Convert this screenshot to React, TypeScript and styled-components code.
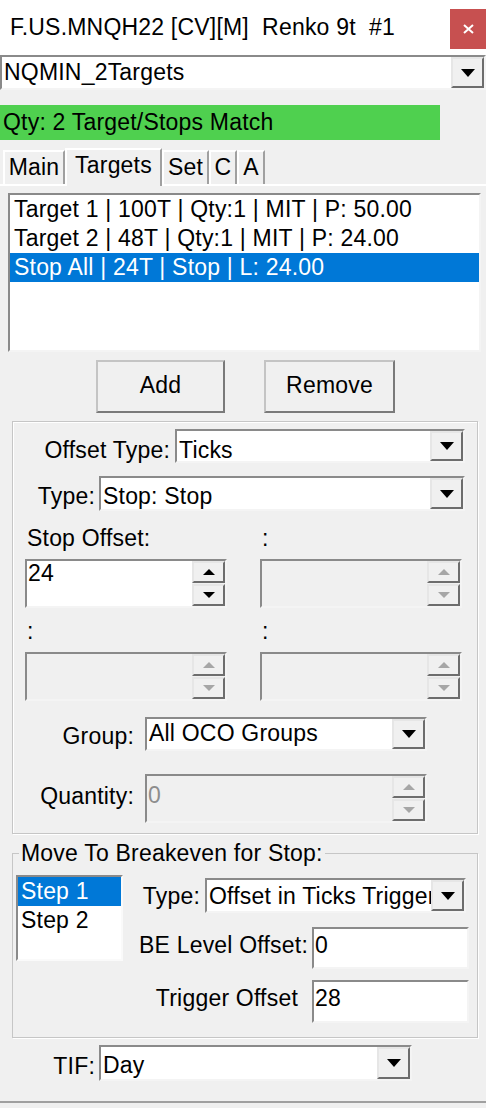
import React from "react";
import styled, { createGlobalStyle, css } from "styled-components";

const GlobalStyle = createGlobalStyle`
  html, body {
    margin: 0;
    padding: 0;
    background: #f0f0f0;
  }
  * {
    box-sizing: border-box;
  }
`;

const sunken = css`
  border-style: solid;
  border-width: 2px;
  border-color: #8a8a8a #f4f4f4 #f4f4f4 #8a8a8a;
`;

const raised = css`
  border-style: solid;
  border-width: 2px;
  border-color: #e6e6e6 #6d6d6d #6d6d6d #e6e6e6;
`;

const Window = styled.div`
  width: 486px;
  height: 1108px;
  overflow: hidden;
  background: #f0f0f0;
  font-family: "Liberation Sans", Arial, sans-serif;
  font-size: 23px;
  line-height: 23px;
  letter-spacing: 0.2px;
  color: #000;
  display: flex;
  flex-direction: column;
`;

const TitleBar = styled.div`
  height: 55px;
  flex: none;
  background: #fff;
  display: flex;
  justify-content: space-between;
  align-items: flex-start;
`;

const TitleText = styled.div`
  padding-left: 10px;
  line-height: 55px;
  white-space: pre;
`;

const CloseButton = styled.div`
  width: 36px;
  height: 40px;
  margin-top: 9px;
  background: #c75050;
  display: flex;
  align-items: center;
  justify-content: center;
`;

const Combo = styled.div<{ $w: number; $h: number }>`
  width: ${(p) => p.$w}px;
  height: ${(p) => p.$h}px;
  flex: none;
  ${sunken};
  background: #fff;
  display: flex;
`;

const ComboValue = styled.div<{ $pt: number }>`
  flex: 1;
  min-width: 0;
  overflow: hidden;
  white-space: nowrap;
  padding: ${(p) => p.$pt}px 0 0 2px;
`;

const DropButton = styled.div`
  width: 33px;
  flex: none;
  ${raised};
  background: #f0f0f0;
  display: flex;
  align-items: center;
  justify-content: center;
`;

const StatusBar = styled.div`
  width: 440px;
  height: 35px;
  margin-top: 15px;
  flex: none;
  background: #4fd04f;
  line-height: 35px;
  padding-left: 3px;
  white-space: nowrap;
`;

const TabStrip = styled.div`
  display: flex;
  align-items: flex-end;
  height: 36px;
  margin-top: 8px;
  padding-left: 3px;
  flex: none;
  position: relative;
  z-index: 1;
`;

const Tab = styled.div<{ $w: number; $active?: boolean }>`
  width: ${(p) => p.$w}px;
  height: ${(p) => (p.$active ? 38 : 34)}px;
  margin-bottom: ${(p) => (p.$active ? -2 : 0)}px;
  border-style: solid;
  border-width: 2px 2px 0 2px;
  border-color: #fff #a0a0a0 transparent #fff;
  background: #f0f0f0;
  text-align: center;
  padding-top: 4px;
  white-space: nowrap;
`;

const TabPanel = styled.div`
  flex: 1;
  margin-bottom: 5px;
  border-top: 2px solid #fff;
  border-bottom: 2px solid #a0a0a0;
  display: flex;
  flex-direction: column;
  align-items: flex-start;
`;

const ListBox = styled.div<{ $w: number; $h: number }>`
  width: ${(p) => p.$w}px;
  height: ${(p) => p.$h}px;
  flex: none;
  ${sunken};
  background: #fff;
  overflow: hidden;
`;

const ListItem = styled.div<{ $selected?: boolean }>`
  height: 29px;
  line-height: 29px;
  padding-left: 3px;
  white-space: nowrap;
  background: ${(p) => (p.$selected ? "#0078d7" : "transparent")};
  color: ${(p) => (p.$selected ? "#fff" : "#000")};
`;

const TargetList = styled(ListBox)`
  margin: 7px 0 0 8px;
  & > div {
    padding-left: 4px;
  }
`;

const ButtonRow = styled.div`
  display: flex;
  gap: 39px;
  margin: 8px 0 0 96px;
`;

const PushButton = styled.div<{ $w: number }>`
  width: ${(p) => p.$w}px;
  height: 53px;
  border-style: solid;
  border-width: 2px;
  border-color: #c4c4c4 #7a7a7a #7a7a7a #c4c4c4;
  background: #f0f0f0;
  display: flex;
  align-items: center;
  justify-content: center;
  padding-bottom: 3px;
`;

const GroupBox = styled.div`
  width: 466px;
  margin: 8px 0 0 12px;
  border: 1px solid #c6c6c6;
  box-shadow: 1px 1px 0 #fff, inset 1px 1px 0 #fff;
  padding-bottom: 10px;
  display: flex;
  flex-direction: column;
`;

const FieldRow = styled.div<{ $mt: number }>`
  display: flex;
  align-items: flex-start;
  margin-top: ${(p) => p.$mt}px;
`;

const FieldLabel = styled.div<{ $w: number; $pt: number; $pr: number }>`
  width: ${(p) => p.$w}px;
  flex: none;
  padding-top: ${(p) => p.$pt}px;
  padding-right: ${(p) => p.$pr}px;
  text-align: right;
  white-space: nowrap;
`;

const SpinGrid = styled.div<{ $mt: number }>`
  display: grid;
  grid-template-columns: 202px 202px;
  column-gap: 33px;
  row-gap: 9px;
  margin: ${(p) => p.$mt}px 0 0 12px;
`;

const CaptionText = styled.div<{ $mt?: number }>`
  height: 23px;
  margin-top: ${(p) => p.$mt ?? 0}px;
  padding-left: 2px;
  white-space: nowrap;
`;

const Spinner = styled.div<{ $w: number; $h: number; $disabled?: boolean }>`
  width: ${(p) => p.$w}px;
  height: ${(p) => p.$h}px;
  flex: none;
  ${sunken};
  background: ${(p) => (p.$disabled ? "#f0f0f0" : "#fff")};
  color: ${(p) => (p.$disabled ? "#8d8d8d" : "#000")};
  display: flex;
`;

const SpinValue = styled.div<{ $pt: number }>`
  flex: 1;
  padding: ${(p) => p.$pt}px 0 0 1px;
`;

const SpinButtons = styled.div`
  width: 33px;
  flex: none;
  display: flex;
  flex-direction: column;
  gap: 1px;
  background: #f0f0f0;
`;

const SpinButton = styled.div`
  flex: 1;
  ${raised};
  background: #f0f0f0;
  display: flex;
  align-items: center;
  justify-content: center;
`;

const BreakevenBox = styled.fieldset`
  width: 466px;
  margin: 8px 0 0 12px;
  padding: 0 0 14px 0;
  min-width: 0;
  border: 1px solid #c6c6c6;
  box-shadow: 1px 1px 0 #fff;
`;

const Legend = styled.legend`
  margin-left: 6px;
  padding: 0 2px;
  line-height: 23px;
  white-space: nowrap;
`;

const BreakevenBody = styled.div`
  display: flex;
  align-items: flex-start;
  margin-top: 10px;
`;

const StepList = styled(ListBox)`
  margin-left: 3px;
  border-color: #8a8a8a #fafafa #fafafa #8a8a8a;
`;

const StepColumn = styled.div`
  display: flex;
  flex-direction: column;
`;

const TextBox = styled.div<{ $w: number; $h: number }>`
  width: ${(p) => p.$w}px;
  height: ${(p) => p.$h}px;
  flex: none;
  ${sunken};
  background: #fff;
  padding: 5px 0 0 1px;
`;

function ArrowGlyph({
  up,
  w,
  h,
  color = "#000",
}: {
  up?: boolean;
  w: number;
  h: number;
  color?: string;
}) {
  const points = up ? `0,${h} ${w},${h} ${w / 2},0` : `0,0 ${w},0 ${w / 2},${h}`;
  return (
    <svg width={w} height={h} viewBox={`0 0 ${w} ${h}`}>
      <polygon points={points} fill={color} />
    </svg>
  );
}

function DropDown({
  value,
  w,
  h,
  pt,
}: {
  value: string;
  w: number;
  h: number;
  pt: number;
}) {
  return (
    <Combo $w={w} $h={h}>
      <ComboValue $pt={pt}>{value}</ComboValue>
      <DropButton>
        <ArrowGlyph w={14} h={8} />
      </DropButton>
    </Combo>
  );
}

function SpinBox({
  value = "",
  w,
  h,
  pt = 1,
  disabled,
}: {
  value?: string;
  w: number;
  h: number;
  pt?: number;
  disabled?: boolean;
}) {
  const arrow = disabled ? "#a6a6a6" : "#000";
  return (
    <Spinner $w={w} $h={h} $disabled={disabled}>
      <SpinValue $pt={pt}>{value}</SpinValue>
      <SpinButtons>
        <SpinButton>
          <ArrowGlyph up w={12} h={6} color={arrow} />
        </SpinButton>
        <SpinButton>
          <ArrowGlyph w={12} h={6} color={arrow} />
        </SpinButton>
      </SpinButtons>
    </Spinner>
  );
}

const targets = [
  { label: "Target 1 | 100T | Qty:1 | MIT | P: 50.00" },
  { label: "Target 2 | 48T | Qty:1 | MIT | P: 24.00" },
  { label: "Stop All | 24T | Stop | L: 24.00", selected: true },
];

export default function App() {
  return (
    <Window>
      <GlobalStyle />
      <TitleBar>
        <TitleText>F.US.MNQH22 [CV][M]  Renko 9t  #1</TitleText>
        <CloseButton>
          <svg width="11" height="10" viewBox="0 0 11 10">
            <path d="M1 1 L10 9 M10 1 L1 9" stroke="#fff" strokeWidth="2" />
          </svg>
        </CloseButton>
      </TitleBar>

      <DropDown value="NQMIN_2Targets" w={486} h={35} pt={4} />

      <StatusBar>Qty: 2 Target/Stops Match</StatusBar>

      <TabStrip>
        <Tab $w={62}>Main</Tab>
        <Tab $w={97} $active>
          Targets
        </Tab>
        <Tab $w={47}>Set</Tab>
        <Tab $w={28}>C</Tab>
        <Tab $w={28}>A</Tab>
      </TabStrip>

      <TabPanel>
        <TargetList $w={473} $h={159}>
          {targets.map((t) => (
            <ListItem key={t.label} $selected={t.selected}>
              {t.label}
            </ListItem>
          ))}
        </TargetList>

        <ButtonRow>
          <PushButton $w={129}>Add</PushButton>
          <PushButton $w={131}>Remove</PushButton>
        </ButtonRow>

        <GroupBox>
          <FieldRow $mt={7}>
            <FieldLabel $w={162} $pt={10} $pr={5}>
              Offset Type:
            </FieldLabel>
            <DropDown value="Ticks" w={290} h={34} pt={8} />
          </FieldRow>

          <FieldRow $mt={13}>
            <FieldLabel $w={86} $pt={9} $pr={4}>
              Type:
            </FieldLabel>
            <DropDown value="Stop: Stop" w={366} h={35} pt={7} />
          </FieldRow>

          <SpinGrid $mt={16}>
            <CaptionText>Stop Offset:</CaptionText>
            <CaptionText>:</CaptionText>
            <SpinBox value="24" w={202} h={49} pt={1} />
            <SpinBox w={202} h={49} disabled />
            <CaptionText $mt={3}>:</CaptionText>
            <CaptionText $mt={3}>:</CaptionText>
            <SpinBox w={202} h={49} disabled />
            <SpinBox w={202} h={49} disabled />
          </SpinGrid>

          <FieldRow $mt={16}>
            <FieldLabel $w={132} $pt={8} $pr={11}>
              Group:
            </FieldLabel>
            <DropDown value="All OCO Groups" w={282} h={34} pt={3} />
          </FieldRow>

          <FieldRow $mt={23}>
            <FieldLabel $w={132} $pt={11} $pr={11}>
              Quantity:
            </FieldLabel>
            <SpinBox value="0" w={282} h={49} pt={8} disabled />
          </FieldRow>
        </GroupBox>

        <BreakevenBox>
          <Legend>Move To Breakeven for Stop:</Legend>
          <BreakevenBody>
            <StepList $w={107} $h={86}>
              <ListItem $selected>Step 1</ListItem>
              <ListItem>Step 2</ListItem>
            </StepList>
            <StepColumn>
              <FieldRow $mt={3}>
                <FieldLabel $w={82} $pt={7} $pr={5}>
                  Type:
                </FieldLabel>
                <DropDown value="Offset in Ticks Trigger" w={261} h={35} pt={5} />
              </FieldRow>
              <FieldRow $mt={14}>
                <FieldLabel $w={189} $pt={7} $pr={4}>
                  BE Level Offset:
                </FieldLabel>
                <TextBox $w={157} $h={42}>
                  0
                </TextBox>
              </FieldRow>
              <FieldRow $mt={11}>
                <FieldLabel $w={189} $pt={7} $pr={14}>
                  Trigger Offset
                </FieldLabel>
                <TextBox $w={157} $h={43}>
                  28
                </TextBox>
              </FieldRow>
            </StepColumn>
          </BreakevenBody>
        </BreakevenBox>

        <FieldRow $mt={7}>
          <FieldLabel $w={99} $pt={10} $pr={4}>
            TIF:
          </FieldLabel>
          <DropDown value="Day" w={313} h={36} pt={7} />
        </FieldRow>
      </TabPanel>
    </Window>
  );
}
